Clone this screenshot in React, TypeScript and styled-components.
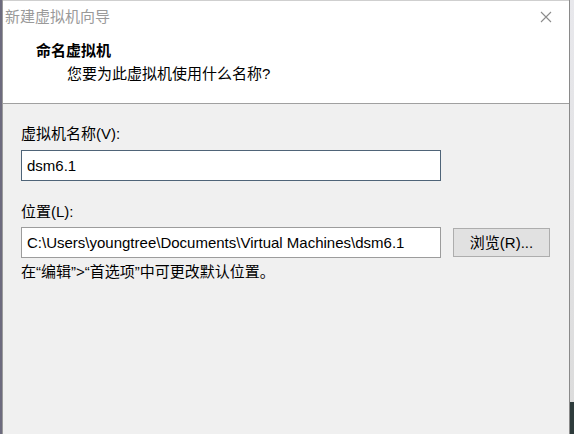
import React from "react";
import styled, { createGlobalStyle } from "styled-components";

const Global = createGlobalStyle`
  html, body { margin: 0; padding: 0; background: #f0f0f0; }
  body { font-family: "Liberation Sans", "Noto Sans CJK SC", sans-serif; }
`;

const FONT = `"Liberation Sans", "Noto Sans CJK SC", sans-serif`;

const Screen = styled.div`
  width: 574px;
  height: 434px;
  display: flex;
  overflow: hidden;
`;

const LeftEdge = styled.div`
  width: 2px;
  background: #6d6b7e;
`;

const RightEdge = styled.div`
  width: 4px;
  display: flex;
  flex-direction: column;
`;

const RightTop = styled.div`
  flex: 1;
  background: linear-gradient(#e8e8ec, #dcdcdc);
`;

const RightBottom = styled.div`
  height: 32px;
  background: #2e3c3c;
`;

const Window = styled.div`
  flex: 1;
  display: flex;
  flex-direction: column;
  border-left: 1px solid #9a9a9a;
  border-right: 1px solid #8a8a8a;
  background: #f0f0f0;
  font-family: ${FONT};
  font-size: 15px;
  color: #000;
`;

const TitleBar = styled.div`
  height: 33px;
  display: flex;
  align-items: center;
  justify-content: space-between;
  padding-left: 2px;
  background: #fff;
  border-top: 1px solid #cfcfcf;
  box-sizing: border-box;
`;

const TitleText = styled.span`
  color: #9a9a9a;
  font-size: 15px;
  line-height: 20px;
`;

const CloseButton = styled.div`
  width: 46px;
  height: 32px;
  display: flex;
  align-items: center;
  justify-content: center;
`;

const Header = styled.div`
  height: 70px;
  background: #fff;
  padding: 8px 0 0 33px;
  box-sizing: border-box;
  display: flex;
  flex-direction: column;
  gap: 3px;
`;

const Heading = styled.div`
  font-weight: bold;
  line-height: 20px;
`;

const SubHeading = styled.div`
  line-height: 20px;
  padding-left: 31px;
`;

const Separator = styled.div`
  height: 1px;
  background: #a0a0a0;
`;

const Body = styled.div`
  flex: 1;
  display: flex;
  flex-direction: column;
  padding: 20px 0 0 18px;
`;

const Label = styled.div<{ $top?: number }>`
  line-height: 20px;
  margin-top: ${(p) => p.$top ?? 0}px;
`;

const Row = styled.div<{ $gap: number }>`
  display: flex;
  align-items: center;
  gap: 12px;
  margin-top: ${(p) => p.$gap}px;
`;

const TextBox = styled.div<{ $focused?: boolean }>`
  width: 420px;
  height: 31px;
  box-sizing: border-box;
  border: 1px solid ${(p) => (p.$focused ? "#4f6478" : "#9c9c9c")};
  background: #fff;
  display: flex;
  align-items: center;
  padding-left: 5px;
  line-height: 20px;
  white-space: nowrap;
  overflow: hidden;
`;

const Button = styled.div`
  width: 97px;
  height: 29px;
  box-sizing: border-box;
  border: 1px solid #adadad;
  background: #e1e1e1;
  display: flex;
  align-items: center;
  justify-content: center;
  line-height: 20px;
`;

const Note = styled.div`
  line-height: 20px;
  margin-top: 4px;
`;

export default function App() {
  return (
    <>
      <Global />
      <Screen>
        <LeftEdge />
        <Window>
          <TitleBar>
            <TitleText>新建虚拟机向导</TitleText>
            <CloseButton>
              <svg width="12" height="12" viewBox="0 0 12 12">
                <path d="M1 1L11 11M11 1L1 11" stroke="#8c8c8c" strokeWidth="1.1" fill="none" />
              </svg>
            </CloseButton>
          </TitleBar>
          <Header>
            <Heading>命名虚拟机</Heading>
            <SubHeading>您要为此虚拟机使用什么名称?</SubHeading>
          </Header>
          <Separator />
          <Body>
            <Label>虚拟机名称(V):</Label>
            <Row $gap={6}>
              <TextBox $focused>dsm6.1</TextBox>
            </Row>
            <Label $top={21}>位置(L):</Label>
            <Row $gap={5}>
              <TextBox>C:\Users\youngtree\Documents\Virtual Machines\dsm6.1</TextBox>
              <Button>浏览(R)...</Button>
            </Row>
            <Note>在“编辑”&gt;“首选项”中可更改默认位置。</Note>
          </Body>
        </Window>
        <RightEdge>
          <RightTop />
          <RightBottom />
        </RightEdge>
      </Screen>
    </>
  );
}
